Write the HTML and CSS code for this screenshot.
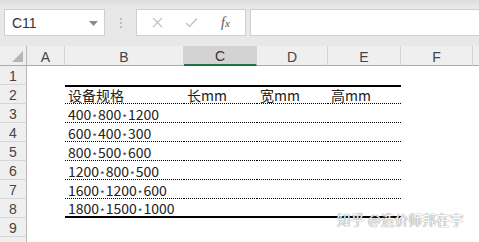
FILE: index.html
```html
<!DOCTYPE html>
<html>
<head>
<meta charset="utf-8">
<link rel="stylesheet" href="styles.css">
</head>
<body>
<div class="app">
  <div class="toolbar">
    <div class="namebox">
      <span class="name">C11</span>
      <svg class="dd" width="9" height="5" viewBox="0 0 9 5"><path d="M0 0H9L4.5 5Z" fill="#8a8a8a"/></svg>
    </div>
    <div class="grip"><i></i><i></i><i></i></div>
    <div class="fbtns">
      <svg class="fx-x" width="11" height="11" viewBox="0 0 11 11"><path d="M1 1L10 10M10 1L1 10" stroke="#c4c4c4" stroke-width="1.3"/></svg>
      <svg class="fx-ok" width="13" height="11" viewBox="0 0 13 11"><path d="M1 6L4.5 9.5L12 1.5" stroke="#c4c4c4" stroke-width="1.5" fill="none"/></svg>
      <span class="fx">f<span class="fxx">x</span></span>
    </div>
    <div class="finput"></div>
  </div>
  <div class="sheet">
    <div class="row hdr">
      <div class="rh corner"><svg width="11" height="11" viewBox="0 0 11 11"><path d="M11 0V11H0Z" fill="#b6b6b6"/></svg></div>
      <div class="ch a">A</div>
      <div class="ch b">B</div>
      <div class="ch c sel">C</div>
      <div class="ch d">D</div>
      <div class="ch e">E</div>
      <div class="ch f">F</div>
      <div class="ch g"></div>
    </div>
    <div class="row"><div class="rh">1</div><div class="cl a"></div><div class="cl b"></div><div class="cl c"></div><div class="cl d"></div><div class="cl e"></div><div class="cl f"></div><div class="cl g"></div></div>
    <div class="row r2"><div class="rh">2</div><div class="cl a"></div><div class="cl b t">设备规格</div><div class="cl c t">长mm</div><div class="cl d t">宽mm</div><div class="cl e t">高mm</div><div class="cl f"></div><div class="cl g"></div></div>
    <div class="row r3"><div class="rh">3</div><div class="cl a"></div><div class="cl b t">400<span class="ast">*</span>800<span class="ast">*</span>1200</div><div class="cl c t"></div><div class="cl d t"></div><div class="cl e t"></div><div class="cl f"></div><div class="cl g"></div></div>
    <div class="row r3"><div class="rh">4</div><div class="cl a"></div><div class="cl b t">600<span class="ast">*</span>400<span class="ast">*</span>300</div><div class="cl c t"></div><div class="cl d t"></div><div class="cl e t"></div><div class="cl f"></div><div class="cl g"></div></div>
    <div class="row r3"><div class="rh">5</div><div class="cl a"></div><div class="cl b t">800<span class="ast">*</span>500<span class="ast">*</span>600</div><div class="cl c t"></div><div class="cl d t"></div><div class="cl e t"></div><div class="cl f"></div><div class="cl g"></div></div>
    <div class="row r3"><div class="rh">6</div><div class="cl a"></div><div class="cl b t">1200<span class="ast">*</span>800<span class="ast">*</span>500</div><div class="cl c t"></div><div class="cl d t"></div><div class="cl e t"></div><div class="cl f"></div><div class="cl g"></div></div>
    <div class="row r3"><div class="rh">7</div><div class="cl a"></div><div class="cl b t">1600<span class="ast">*</span>1200<span class="ast">*</span>600</div><div class="cl c t"></div><div class="cl d t"></div><div class="cl e t"></div><div class="cl f"></div><div class="cl g"></div></div>
    <div class="row r8"><div class="rh">8</div><div class="cl a"></div><div class="cl b t">1800<span class="ast">*</span>1500<span class="ast">*</span>1000</div><div class="cl c t"></div><div class="cl d t"></div><div class="cl e t"></div><div class="cl f"></div><div class="cl g"></div></div>
    <div class="row"><div class="rh">9</div><div class="cl a"></div><div class="cl b"></div><div class="cl c"></div><div class="cl d"></div><div class="cl e"></div><div class="cl f"></div><div class="cl g"></div></div>
    <div class="row"><div class="rh"></div><div class="cl a"></div><div class="cl b"></div><div class="cl c"></div><div class="cl d"></div><div class="cl e"></div><div class="cl f"></div><div class="cl g"></div></div>
    <div class="watermark">知乎 @造价师邦在宇</div>
  </div>
</div>
</body>
</html>
```

FILE: styles.css
```css
* { box-sizing: border-box; }
html, body { margin: 0; padding: 0; background: #ffffff; overflow: hidden; }
body { width: 479px; height: 242px; font-family: "Noto Sans CJK SC", "Liberation Sans", sans-serif; }
.app { width: 479px; height: 242px; background: #e8e8e8; overflow: hidden; }
.toolbar {
  display: flex; align-items: flex-start;
  height: 46px; padding: 9px 0 0 4px;
  background: linear-gradient(#dcdcdc 0, #e8e8e8 6px, #e8e8e8 100%);
}
.namebox {
  width: 101px; height: 27px; background: #fff; border: 1px solid #cfcfcf;
  display: flex; align-items: center; justify-content: space-between;
  padding: 0 6px 0 7px;
}
.name { font-family: "Liberation Sans", sans-serif; font-size: 14px; color: #333; }
.dd { margin-top: 1px; }
.grip { width: 31px; height: 27px; display: flex; flex-direction: column; align-items: center; justify-content: center; gap: 2px; }
.grip i { display: block; width: 2px; height: 2px; background: #bdbdbd; }
.fbtns {
  width: 110px; height: 27px; background: #fff; border: 1px solid #cfcfcf;
  display: flex; align-items: center; padding-left: 15px;
}
.fx-x { margin-right: 22px; }
.fx-ok { margin-right: 23px; }
.fx { font-family: "Liberation Serif", serif; font-style: italic; font-size: 14px; color: #555; }
.fxx { font-size: 11px; }
.finput { flex: 1; height: 27px; background: #fff; border: 1px solid #cfcfcf; border-right: none; margin-left: 4px; }
.sheet { position: relative; background: #fff; }
.row { display: flex; height: 19px; }
.hdr { height: 20px; background: #efefef; }
.rh {
  width: 27px; flex: none; background: #efefef;
  border-right: 1px solid #b9b9b9; border-bottom: 1px solid #d6d6d6;
  font-family: "Liberation Sans", sans-serif; font-size: 14px; color: #444;
  display: flex; align-items: center; justify-content: center; padding-top: 2px;
}
.corner { justify-content: flex-end; align-items: flex-end; padding: 0 3px 3px 0; border-bottom: 1px solid #ababab; }
.ch {
  flex: none; border-right: 1px solid #d4d4d4; border-bottom: 1px solid #ababab;
  font-family: "Liberation Sans", sans-serif; font-size: 14px; color: #444;
  display: flex; align-items: center; justify-content: center; padding-top: 2px;
}
.ch.sel { background: #d3d3d3; border-bottom: 2px solid #217346; color: #333; }
.a { width: 38px; }
.b { width: 119px; }
.c { width: 73px; }
.d { width: 71px; }
.e { width: 73px; }
.f { width: 72px; }
.g { width: 20px; border-right: none !important; }
.cl { flex: none; background: #fff; }
.t {
  display: block; font-size: 14px; color: #222; line-height: 18px; padding: 1px 0 0 3px;
  white-space: nowrap;
  border-bottom: 1px dotted #000;
}
.ast { font-size: 10px; line-height: 10px; margin: 0 1px; vertical-align: -2px; color: #444; }
.r2 .t { border-top: 2px solid #000; line-height: 16px; padding-top: 0; }
.r8 .t { border-bottom: 2px solid #000; line-height: 16px; }
.watermark {
  position: absolute; left: 337px; top: 163px;
  font-size: 13.5px; color: #fafafa; letter-spacing: 0.3px;
  text-shadow: 0 0 1px #7a7a7a, 0 0 1px #9a9a9a;
}
```
